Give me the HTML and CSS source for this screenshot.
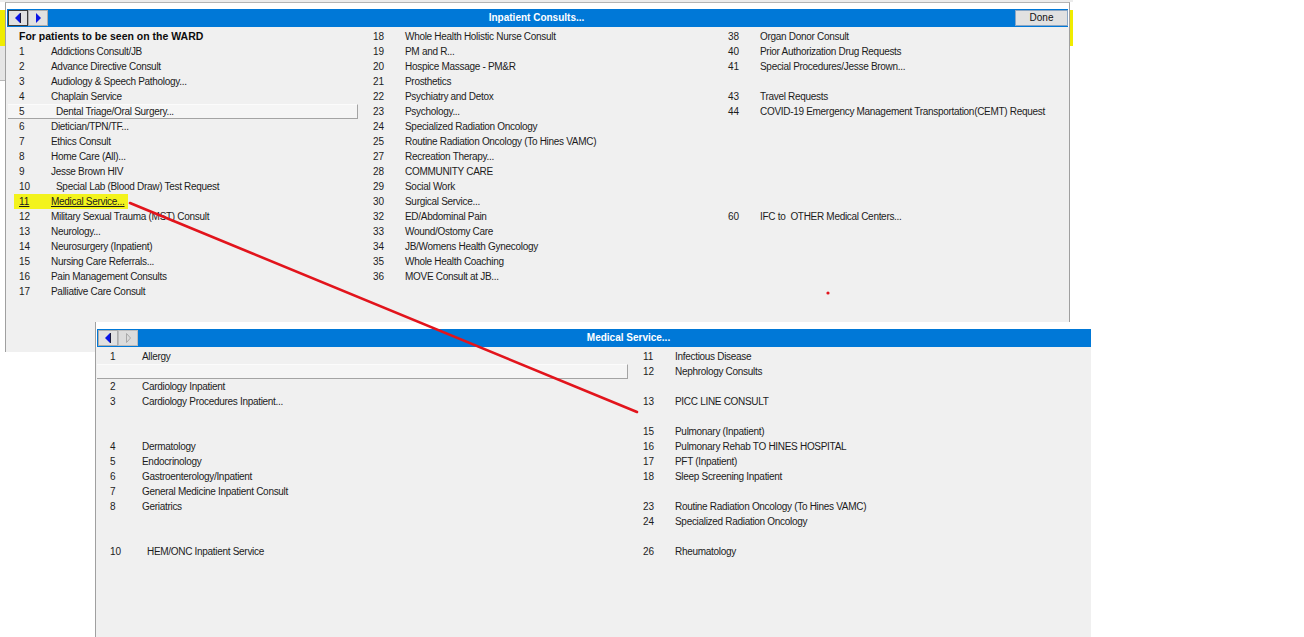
FILE: index.html
```html
<!DOCTYPE html>
<html>
<head>
<meta charset="utf-8">
<title>Inpatient Consults</title>
<link rel="stylesheet" href="styles.css">
</head>
<body>
<div class="desk">
  <div class="bg-top"></div>
  <div class="bg-yellow"></div>
  <div class="bg-left"></div>

  <section class="win win1">
    <header class="titlebar">
      <button class="nav back focus"><svg width="10" height="12" viewBox="0 0 10 12"><polygon points="2,6 7,1 7,11" fill="#0a14e6"/><line x1="7.5" y1="1" x2="7.5" y2="11" stroke="#1a1a3a" stroke-width="1"/></svg></button>
      <button class="nav fwd"><svg width="10" height="12" viewBox="0 0 10 12"><polygon points="3,1 8,6 3,11" fill="#0a14e6"/></svg></button>
      <div class="title">Inpatient Consults...</div>
      <button class="done">Done</button>
    </header>
    <div class="body">
      <div class="col">
        <div class="row head">For patients to be seen on the WARD</div>
        <div class="row"><span class="num">1</span><span class="lbl">Addictions Consult/JB</span></div>
        <div class="row"><span class="num">2</span><span class="lbl">Advance Directive Consult</span></div>
        <div class="row"><span class="num">3</span><span class="lbl">Audiology &amp; Speech Pathology...</span></div>
        <div class="row"><span class="num">4</span><span class="lbl">Chaplain Service</span></div>
        <div class="row btn"><span class="num">5</span><span class="lbl ind">Dental Triage/Oral Surgery...</span></div>
        <div class="row"><span class="num">6</span><span class="lbl">Dietician/TPN/TF...</span></div>
        <div class="row"><span class="num">7</span><span class="lbl">Ethics Consult</span></div>
        <div class="row"><span class="num">8</span><span class="lbl">Home Care (All)...</span></div>
        <div class="row"><span class="num">9</span><span class="lbl">Jesse Brown HIV</span></div>
        <div class="row"><span class="num">10</span><span class="lbl ind">Special Lab (Blood Draw) Test Request</span></div>
        <div class="row hl"><span class="mark"><span class="num">11</span><span class="lbl">Medical Service...</span></span></div>
        <div class="row"><span class="num">12</span><span class="lbl">Military Sexual Trauma (MST) Consult</span></div>
        <div class="row"><span class="num">13</span><span class="lbl">Neurology...</span></div>
        <div class="row"><span class="num">14</span><span class="lbl">Neurosurgery (Inpatient)</span></div>
        <div class="row"><span class="num">15</span><span class="lbl">Nursing Care Referrals...</span></div>
        <div class="row"><span class="num">16</span><span class="lbl">Pain Management Consults</span></div>
        <div class="row"><span class="num">17</span><span class="lbl">Palliative Care Consult</span></div>
      </div>
      <div class="col">
        <div class="row"><span class="num">18</span><span class="lbl">Whole Health Holistic Nurse Consult</span></div>
        <div class="row"><span class="num">19</span><span class="lbl">PM and R...</span></div>
        <div class="row"><span class="num">20</span><span class="lbl">Hospice Massage - PM&amp;R</span></div>
        <div class="row"><span class="num">21</span><span class="lbl">Prosthetics</span></div>
        <div class="row"><span class="num">22</span><span class="lbl">Psychiatry and Detox</span></div>
        <div class="row"><span class="num">23</span><span class="lbl">Psychology...</span></div>
        <div class="row"><span class="num">24</span><span class="lbl">Specialized Radiation Oncology</span></div>
        <div class="row"><span class="num">25</span><span class="lbl">Routine Radiation Oncology (To Hines VAMC)</span></div>
        <div class="row"><span class="num">27</span><span class="lbl">Recreation Therapy...</span></div>
        <div class="row"><span class="num">28</span><span class="lbl">COMMUNITY CARE</span></div>
        <div class="row"><span class="num">29</span><span class="lbl">Social Work</span></div>
        <div class="row"><span class="num">30</span><span class="lbl">Surgical Service...</span></div>
        <div class="row"><span class="num">32</span><span class="lbl">ED/Abdominal Pain</span></div>
        <div class="row"><span class="num">33</span><span class="lbl">Wound/Ostomy Care</span></div>
        <div class="row"><span class="num">34</span><span class="lbl">JB/Womens Health Gynecology</span></div>
        <div class="row"><span class="num">35</span><span class="lbl">Whole Health Coaching</span></div>
        <div class="row"><span class="num">36</span><span class="lbl">MOVE Consult at JB...</span></div>
      </div>
      <div class="col">
        <div class="row"><span class="num">38</span><span class="lbl">Organ Donor Consult</span></div>
        <div class="row"><span class="num">40</span><span class="lbl">Prior Authorization Drug Requests</span></div>
        <div class="row"><span class="num">41</span><span class="lbl">Special Procedures/Jesse Brown...</span></div>
        <div class="row"></div>
        <div class="row"><span class="num">43</span><span class="lbl">Travel Requests</span></div>
        <div class="row"><span class="num">44</span><span class="lbl">COVID-19 Emergency Management Transportation(CEMT) Request</span></div>
        <div class="row"></div>
        <div class="row"></div>
        <div class="row"></div>
        <div class="row"></div>
        <div class="row"></div>
        <div class="row"></div>
        <div class="row"><span class="num">60</span><span class="lbl">IFC to&nbsp; OTHER Medical Centers...</span></div>
      </div>
    </div>
  </section>

  <section class="win win2">
    <header class="titlebar">
      <button class="nav back"><svg width="10" height="12" viewBox="0 0 10 12"><polygon points="2,6 7,1 7,11" fill="#0a14e6"/><line x1="7.5" y1="1" x2="7.5" y2="11" stroke="#1a1a3a" stroke-width="1"/></svg></button>
      <button class="nav fwd off"><svg width="10" height="12" viewBox="0 0 10 12"><polygon points="3.5,1.5 7.5,6 3.5,10.5" fill="none" stroke="#a8a8a8" stroke-width="1"/></svg></button>
      <div class="title">Medical Service...</div>
    </header>
    <div class="body">
      <div class="col">
        <div class="row"><span class="num">1</span><span class="lbl">Allergy</span></div>
        <div class="row btn"></div>
        <div class="row"><span class="num">2</span><span class="lbl">Cardiology Inpatient</span></div>
        <div class="row"><span class="num">3</span><span class="lbl">Cardiology Procedures Inpatient...</span></div>
        <div class="row"></div>
        <div class="row"></div>
        <div class="row"><span class="num">4</span><span class="lbl">Dermatology</span></div>
        <div class="row"><span class="num">5</span><span class="lbl">Endocrinology</span></div>
        <div class="row"><span class="num">6</span><span class="lbl">Gastroenterology/Inpatient</span></div>
        <div class="row"><span class="num">7</span><span class="lbl">General Medicine Inpatient Consult</span></div>
        <div class="row"><span class="num">8</span><span class="lbl">Geriatrics</span></div>
        <div class="row"></div>
        <div class="row"></div>
        <div class="row"><span class="num">10</span><span class="lbl ind">HEM/ONC Inpatient Service</span></div>
      </div>
      <div class="col">
        <div class="row"><span class="num">11</span><span class="lbl">Infectious Disease</span></div>
        <div class="row"><span class="num">12</span><span class="lbl">Nephrology Consults</span></div>
        <div class="row"></div>
        <div class="row"><span class="num">13</span><span class="lbl">PICC LINE CONSULT</span></div>
        <div class="row"></div>
        <div class="row"><span class="num">15</span><span class="lbl">Pulmonary (Inpatient)</span></div>
        <div class="row"><span class="num">16</span><span class="lbl">Pulmonary Rehab TO HINES HOSPITAL</span></div>
        <div class="row"><span class="num">17</span><span class="lbl">PFT (Inpatient)</span></div>
        <div class="row"><span class="num">18</span><span class="lbl">Sleep Screening Inpatient</span></div>
        <div class="row"></div>
        <div class="row"><span class="num">23</span><span class="lbl">Routine Radiation Oncology (To Hines VAMC)</span></div>
        <div class="row"><span class="num">24</span><span class="lbl">Specialized Radiation Oncology</span></div>
        <div class="row"></div>
        <div class="row"><span class="num">26</span><span class="lbl">Rheumatology</span></div>
      </div>
    </div>
  </section>

  <svg class="overlay" width="1304" height="637" viewBox="0 0 1304 637">
    <line x1="130" y1="203" x2="637" y2="412" stroke="#e2141c" stroke-width="2.6" stroke-linecap="round"/>
    <circle cx="828" cy="293" r="1.6" fill="#e2141c"/>
  </svg>
</div>
</body>
</html>
```

FILE: styles.css
```css
html, body {
  margin: 0;
  padding: 0;
  background: #ffffff;
}

body {
  font-family: "Liberation Sans", Arial, sans-serif;
  font-size: 10px;
  color: #1c1c1c;
}

.desk {
  position: relative;
  width: 1304px;
  height: 637px;
  overflow: hidden;
}

.bg-top {
  position: absolute;
  left: 0;
  top: 0;
  width: 1073px;
  height: 2px;
  background: #ececec;
}

.bg-yellow {
  position: absolute;
  left: 0;
  top: 10px;
  width: 1073px;
  height: 36px;
  background: #f0ec00;
}

.bg-left {
  position: absolute;
  left: 0;
  top: 46px;
  width: 5px;
  height: 34px;
  background: #e6e6e6;
  border-bottom: 1px solid #b8b8b8;
}

.win {
  position: absolute;
  display: flex;
  flex-direction: column;
  box-sizing: border-box;
  background: #ffffff;
  border-left: 1px solid #a0a0a0;
}

.win1 {
  left: 5px;
  top: 2px;
  width: 1065px;
  height: 350px;
  border-top: 1px solid #b4b4b4;
  border-right: 1px solid #a0a0a0;
}

.win2 {
  left: 95px;
  top: 322px;
  width: 996px;
  height: 315px;
  z-index: 2;
}

.titlebar {
  flex: none;
  height: 18px;
  margin: 6px 1px 0;
  background: #0078d7;
  display: flex;
  align-items: center;
}

.win2 .titlebar {
  margin: 7px 0 0 1px;
}

.nav {
  flex: none;
  width: 20px;
  height: 16px;
  box-sizing: border-box;
  margin: 0;
  padding: 0;
  border: 1px solid #adadad;
  background: #e1e1e1;
  display: flex;
  align-items: center;
  justify-content: center;
}

.nav.back {
  margin-left: 1px;
}

.nav.focus {
  border-color: #3a3a3a;
}

.nav.off {
  background: #dcdcdc;
  border-color: #bcbcbc;
}

.title {
  flex: 1;
  text-align: center;
  color: #ffffff;
  font-weight: bold;
  font-size: 10px;
  line-height: 18px;
  white-space: nowrap;
}

.win1 .title {
  padding-left: 10px;
}

.win2 .title {
  padding-left: 28px;
}

.done {
  flex: none;
  width: 53px;
  height: 16px;
  box-sizing: border-box;
  margin: 0;
  padding: 0;
  border: 1px solid #8aa6c4;
  background: #e1e1e1;
  font-family: "Liberation Sans", Arial, sans-serif;
  font-size: 10px;
  color: #111111;
  line-height: 14px;
}

.body {
  flex: 1;
  display: grid;
  align-content: start;
  padding-top: 2px;
  background: #f0f0f0;
}

.win1 .body {
  grid-template-columns: 354px 355px 1fr;
}

.win2 .body {
  grid-template-columns: 533px 1fr;
  padding-left: 1px;
}

.row {
  height: 15px;
  line-height: 15px;
  display: flex;
  white-space: nowrap;
}

.lbl {
  letter-spacing: -0.3px;
}

.num {
  flex: none;
  width: 45px;
  padding-left: 13px;
  box-sizing: border-box;
}

.head {
  padding-left: 13px;
  font-weight: bold;
  font-size: 10.5px;
  color: #0c0c0c;
}

.ind {
  padding-left: 5px;
}

.row.btn {
  box-sizing: border-box;
  margin-right: 2px;
  border-top: 1px solid #fbfbfb;
  border-bottom: 1px solid #a4a4a4;
  border-right: 1px solid #a4a4a4;
  background: #f5f5f5;
  line-height: 13px;
}

.win1 .row.btn {
  margin-left: 2px;
}

.win1 .row.btn .num {
  width: 43px;
  padding-left: 11px;
}

.mark {
  display: inline-flex;
  margin-left: 8px;
  padding-right: 3px;
  background: #f3f31c;
  text-decoration: underline;
}

.mark .num {
  width: 37px;
  padding-left: 5px;
}

.overlay {
  position: absolute;
  left: 0;
  top: 0;
  z-index: 5;
  pointer-events: none;
}
```
